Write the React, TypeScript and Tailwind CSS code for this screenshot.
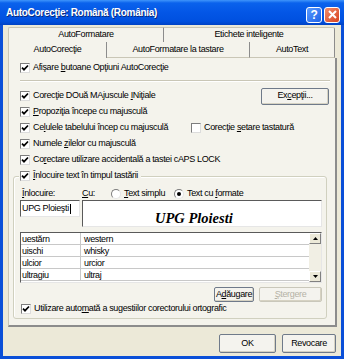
import React from "react";

const Box = ({ checked = false }: { checked?: boolean }) => (
  <span className="w-[10px] h-[10px] shrink-0 bg-white border border-t-[#7d7d7d] border-l-[#7d7d7d] border-b-[#dcdcdc] border-r-[#dcdcdc] flex items-center justify-center">
    {checked && (
      <svg width="8" height="8" viewBox="0 0 8 8">
        <path d="M1 3.6 L3 5.7 L7 1.5" stroke="#000" strokeWidth="1.7" fill="none" />
      </svg>
    )}
  </span>
);

const Radio = ({ on = false }: { on?: boolean }) => (
  <span className="w-[10px] h-[10px] shrink-0 rounded-full bg-white border border-t-[#7d7d7d] border-l-[#7d7d7d] border-b-[#e4e4e4] border-r-[#e4e4e4] flex items-center justify-center">
    {on && <span className="w-[4px] h-[4px] rounded-full bg-black" />}
  </span>
);

const CheckRow = ({ checked = true, children }: { checked?: boolean; children: React.ReactNode }) => (
  <div className="flex items-center gap-[3px]">
    <Box checked={checked} />
    <span className="whitespace-nowrap">{children}</span>
  </div>
);

const Btn = ({ w, disabled = false, children }: { w: string; disabled?: boolean; children: React.ReactNode }) => (
  <div
    className={`${w} h-full flex items-center justify-center bg-[#f4f3ee] border rounded-[2px] shadow-[inset_-1px_-1px_0_#d6d2c2] ${
      disabled ? "text-[#b5b2a6] border-[#c9c7ba]" : "border-[#6f7a8a]"
    }`}
  >
    {children}
  </div>
);

const U = ({ children }: { children: React.ReactNode }) => <span className="underline">{children}</span>;

const rows = [
  ["uestărn", "western"],
  ["uischi", "whisky"],
  ["ulcior", "urcior"],
  ["ultragiu", "ultraj"],
];

export default function App() {
  return (
    <div className="w-[344px] h-[359px] flex flex-col bg-[#0a4fd8] overflow-hidden text-black text-[9px] tracking-[-0.35px] font-['Tahoma','Liberation_Sans',Arial,sans-serif]">
      {/* title bar */}
      <div className="h-[25px] shrink-0 flex items-center justify-between pl-[6px] pr-[4px] bg-[linear-gradient(to_bottom,#3f95fb_0%,#0a62ec_12%,#0356e6_50%,#0050df_85%,#0042c4_100%)]">
        <span className="text-white font-bold text-[10px] tracking-[-0.3px] [text-shadow:1px_1px_0_#0a2a7a] -mt-[1px]">
          AutoCorecţie: Română (România)
        </span>
        <div className="flex gap-[2px] mt-[4px]">
          <div className="w-[16px] h-[16px] rounded-[3px] border border-white bg-[linear-gradient(135deg,#5b9bff,#1d62e8)] flex items-center justify-center text-white font-bold text-[12px] leading-none">
            ?
          </div>
          <div className="w-[16px] h-[16px] rounded-[3px] border border-white bg-[linear-gradient(135deg,#f08d6c,#d8421e)] flex items-center justify-center">
            <svg width="9" height="9" viewBox="0 0 9 9">
              <path d="M1 1 L8 8 M8 1 L1 8" stroke="#fff" strokeWidth="2" />
            </svg>
          </div>
        </div>
      </div>

      {/* dialog body */}
      <div className="flex-1 mx-[3px] mb-[3px] bg-[#ece9d8] flex flex-col pt-[2px] px-[5px]">
        {/* back tab row */}
        <div className="h-[15px] flex w-[327px]">
          <div className="w-[156px] flex items-center justify-center bg-[#f4f3ec] border-t border-l border-[#c9c6b6] border-r border-r-[#8c8c8c] rounded-tl-[2px]">
            AutoFormatare
          </div>
          <div className="w-[171px] flex items-center justify-center bg-[#f4f3ec] border-t border-[#c9c6b6] border-r border-r-[#8c8c8c] rounded-tr-[2px]">
            Etichete inteligente
          </div>
        </div>
        {/* front tab row */}
        <div className="h-[16px] flex w-[327px]">
          <div className="w-[99px] flex items-center justify-center bg-[#f4f3ec] border-l border-[#c9c6b6] border-r border-r-[#8c8c8c]">
            AutoCorecţie
          </div>
          <div className="w-[143px] flex items-center justify-center bg-[#f4f3ec] border-b border-[#c9c6b6] border-r border-r-[#8c8c8c]">
            AutoFormatare la tastare
          </div>
          <div className="w-[85px] flex items-center justify-center bg-[#f4f3ec] border-b border-[#c9c6b6] border-r border-r-[#8c8c8c]">
            AutoText
          </div>
        </div>

        {/* panel */}
        <div className="h-[269px] w-[329px] bg-[#f4f3ec] border-l border-[#c9c6b6] border-r-2 border-r-[#8c8c8c] border-b-2 border-b-[#8c8c8c] flex flex-col pl-[11px] pr-[5px]">
          <div className="h-[14px] mt-[3px] flex items-center">
            <CheckRow>
              Afişare <U>b</U>utoane Opţiuni AutoCorecţie
            </CheckRow>
          </div>
          <div className="mt-[5px] h-[2px] border-t border-[#c9c6b6] border-b border-b-white" />

          <div className="mt-[6px] h-[16px] flex items-center">
            <CheckRow>
              Corecţie DOuă MAjuscule <U>I</U>Niţiale
            </CheckRow>
            <div className="ml-auto h-[17px] mr-[1px]">
              <Btn w="w-[68px]">
                Ex<U>c</U>epţii...
              </Btn>
            </div>
          </div>
          <div className="h-[16px] flex items-center">
            <CheckRow>
              <U>P</U>ropoziţia începe cu majusculă
            </CheckRow>
          </div>
          <div className="h-[16px] flex items-center">
            <div className="w-[171px]">
              <CheckRow>
                Ce<U>l</U>ulele tabelului încep cu majusculă
              </CheckRow>
            </div>
            <CheckRow checked={false}>
              Corecţie <U>s</U>etare tastatură
            </CheckRow>
          </div>
          <div className="h-[16px] flex items-center">
            <CheckRow>
              Numele <U>z</U>ilelor cu majusculă
            </CheckRow>
          </div>
          <div className="h-[16px] flex items-center">
            <CheckRow>
              Co<U>r</U>ectare utilizare accidentală a tastei cAPS LOCK
            </CheckRow>
          </div>

          {/* group box legend */}
          <div className="h-[16px] flex items-center relative z-10">
            <div className="bg-[#f4f3ec] pr-[3px] pl-[1px] -ml-[1px]">
              <CheckRow>
                <U>Î</U>nlocuire text în timpul tastării
              </CheckRow>
            </div>
          </div>
          {/* group box */}
          <div className="-mt-[8px] ml-[-7px] w-[314px] h-[143px] border border-[#d0d0bf] rounded-[3px] shadow-[inset_1px_1px_0_#fff] flex flex-col pt-[11px]">
            <div className="h-[12px] flex items-center pl-[8px]">
              <span className="w-[60px]">
                <U>Î</U>nlocuire:
              </span>
              <span className="w-[29px]">
                <U>C</U>u:
              </span>
              <span className="w-[63px] flex items-center gap-[3px]">
                <Radio />
                <span>
                  <U>T</U>ext simplu
                </span>
              </span>
              <span className="flex items-center gap-[3px]">
                <Radio on />
                <span>
                  Text cu <U>f</U>ormate
                </span>
              </span>
            </div>

            <div className="flex items-start gap-[2px] pl-[6px] h-[27px]">
              <div className="w-[60px] h-[17px] bg-white border border-t-[#5a5a5a] border-l-[#5a5a5a] border-b-[#e6e6e6] border-r-[#e6e6e6] flex items-center pl-[1px]">
                UPG Ploieşti
                <span className="w-px h-[10px] bg-black ml-[1px]" />
              </div>
              <div className="w-[240px] h-[27px] bg-white border border-t-[#5a5a5a] border-l-[#5a5a5a] border-b-[#e6e6e6] border-r-[#e6e6e6] pl-[72px] pt-[10px]">
                <span className="font-['Liberation_Serif',serif] font-bold italic text-[14.5px] tracking-normal leading-none">
                  UPG Ploiesti
                </span>
              </div>
            </div>

            {/* list */}
            <div className="mt-[5px] ml-[6px] w-[302px] h-[51px] bg-white border border-t-[#5a5a5a] border-l-[#5a5a5a] border-b-[#e6e6e6] border-r-[#e6e6e6] flex">
              <div className="flex-1 flex flex-col">
                {rows.map(([a, b], i) => (
                  <div key={i} className="h-[12px] shrink-0 flex border-b border-[#c8c8c8]">
                    <span className="w-[60px] pl-[1px] border-r border-[#c8c8c8] leading-[12px]">{a}</span>
                    <span className="pl-[3px] leading-[12px]">{b}</span>
                  </div>
                ))}
              </div>
              <div className="w-[12px] bg-[#f1efe4] flex flex-col justify-between">
                <div className="h-[11px] bg-[#ece9d8] border border-t-white border-l-white border-b-[#808080] border-r-[#808080] flex items-center justify-center">
                  <svg width="5" height="3" viewBox="0 0 5 3">
                    <path d="M0 3 L2.5 0 L5 3 Z" fill="#000" />
                  </svg>
                </div>
                <div className="h-[11px] bg-[#ece9d8] border border-t-white border-l-white border-b-[#808080] border-r-[#808080] flex items-center justify-center">
                  <svg width="5" height="3" viewBox="0 0 5 3">
                    <path d="M0 0 L5 0 L2.5 3 Z" fill="#000" />
                  </svg>
                </div>
              </div>
            </div>

            <div className="mt-[4px] h-[15px] flex justify-end gap-[5px] pr-[4px]">
              <Btn w="w-[40px]">
                A<U>d</U>ăugare
              </Btn>
              <Btn w="w-[63px]" disabled>
                <U>Ş</U>tergere
              </Btn>
            </div>
            <div className="h-[13px] flex items-center pl-[7px]">
              <CheckRow>
                Utilizare auto<U>m</U>ată a sugestiilor corectorului ortografic
              </CheckRow>
            </div>
          </div>
        </div>

        {/* bottom buttons */}
        <div className="mt-[7px] h-[19px] flex justify-end gap-[6px]">
          <Btn w="w-[57px]">OK</Btn>
          <Btn w="w-[54px]">Revocare</Btn>
        </div>
      </div>
    </div>
  );
}
